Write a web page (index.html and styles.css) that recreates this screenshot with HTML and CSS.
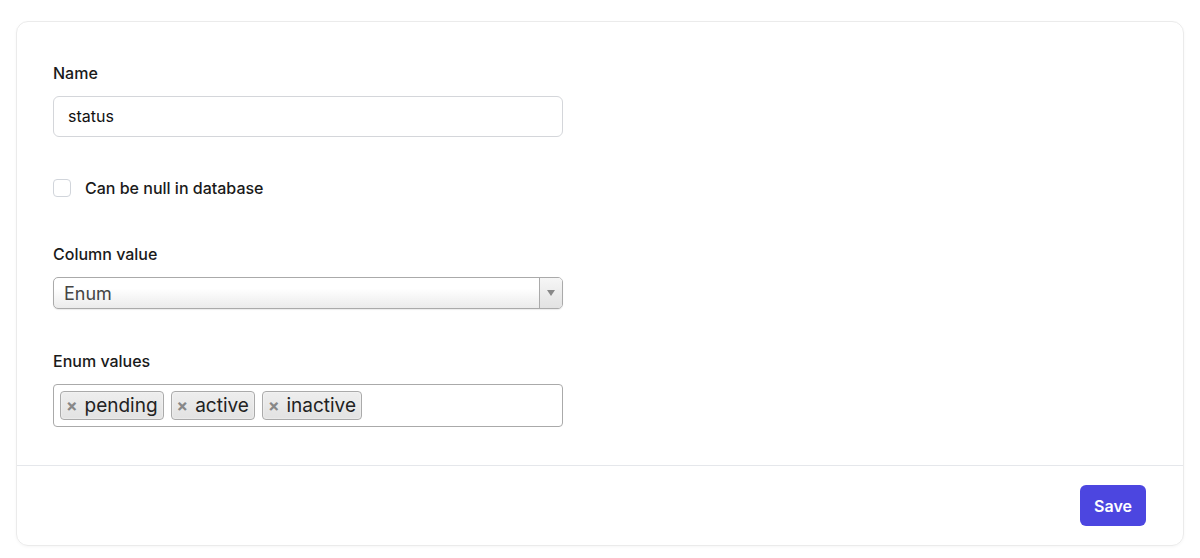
FILE: index.html
```html
<!DOCTYPE html>
<html>
<head>
<meta charset="utf-8">
<link rel="stylesheet" href="styles.css">
</head>
<body>
<div class="card">
  <div class="card-body">
    <div class="field">
      <label class="label">Name</label>
      <div class="input">status</div>
    </div>
    <div class="check-row">
      <span class="checkbox"></span>
      <span class="check-label">Can be null in database</span>
    </div>
    <div class="field">
      <label class="label">Column value</label>
      <div class="select">
        <span class="select-text">Enum</span>
        <span class="select-arrow"><span class="tri"></span></span>
      </div>
    </div>
    <div class="field">
      <label class="label">Enum values</label>
      <div class="tags">
        <span class="tag"><span class="x">×</span>pending</span>
        <span class="tag"><span class="x">×</span>active</span>
        <span class="tag"><span class="x">×</span>inactive</span>
      </div>
    </div>
  </div>
  <div class="card-footer">
    <button class="btn">Save</button>
  </div>
</div>
</body>
</html>
```
FILE: styles.css
```css
* { box-sizing: border-box; }
html, body { margin: 0; background: #fff; }
body {
  padding: 21px 16px 12px 16px;
  font-family: Inter, "Noto Sans", sans-serif;
  color: #111827;
}
.card {
  border: 1px solid #ebebeb;
  border-radius: 12px;
  box-shadow: 0 1px 3px rgba(0,0,0,0.04);
  height: 525px;
  display: flex;
  flex-direction: column;
}
.card-body {
  padding: 39px 36px 38px 36px;
  display: flex;
  flex-direction: column;
  border-bottom: 1px solid #e5e7eb;
}
.field { display: flex; flex-direction: column; width: 510px; }
.label {
  font-size: 16px;
  line-height: 24px;
  font-weight: 500;
  margin-bottom: 11px;
  color: #1a1a1a;
}
.input {
  height: 41px;
  border: 1px solid #d4d6da;
  border-radius: 6px;
  padding: 0 14px;
  font-size: 16px;
  line-height: 39px;
  color: #111;
}
.check-row {
  display: flex;
  align-items: center;
  height: 24px;
  margin: 39px 0 42px 0;
}
.checkbox {
  width: 18px;
  height: 18px;
  border: 1px solid #d1d5db;
  border-radius: 4px;
  margin-right: 14px;
}
.check-label { font-size: 16px; font-weight: 500; color: #1a1a1a; }
.select {
  height: 32px;
  border: 1px solid #aaa;
  border-radius: 5px;
  background: linear-gradient(#ffffff 0%, #ffffff 35%, #ebebeb 100%);
  display: flex;
  align-items: center;
  justify-content: space-between;
  margin-bottom: 40px;
  box-shadow: 0 1px 1px rgba(0,0,0,0.08);
}
.select-text { font-size: 18px; color: #444; padding-left: 10px; }
.select-arrow {
  width: 23px;
  height: 100%;
  border-left: 1px solid #aaa;
  display: flex;
  align-items: center;
  justify-content: center;
  background: linear-gradient(#f6f6f6, #e2e2e2);
  border-radius: 0 4px 4px 0;
}
.tri {
  width: 0; height: 0;
  border-left: 4px solid transparent;
  border-right: 4px solid transparent;
  border-top: 6px solid #888;
}
.tags {
  height: 43px;
  border: 1px solid #aaa;
  border-radius: 4px;
  display: flex;
  align-items: center;
  gap: 7px;
  padding: 0 6px;
}
.tag {
  display: flex;
  align-items: center;
  height: 29px;
  border: 1px solid #aaa;
  border-radius: 4px;
  background: linear-gradient(#eeeeee, #e2e2e2);
  font-size: 19px;
  color: #222;
  padding: 0 5px 0 5px;
  box-shadow: 0 0 2px #fff inset;
}
.x {
  color: #888;
  font-weight: 700;
  font-size: 17px;
  margin-right: 7px;
}
.card-footer {
  flex: 1;
  display: flex;
  justify-content: flex-end;
  align-items: flex-start;
  padding: 19px 37px 0 0;
}
.btn {
  width: 66px;
  height: 41px;
  border: none;
  border-radius: 6px;
  background: #4c46e0;
  color: #fff;
  font-family: Inter, sans-serif;
  font-size: 16px;
  font-weight: 600;
}
```
